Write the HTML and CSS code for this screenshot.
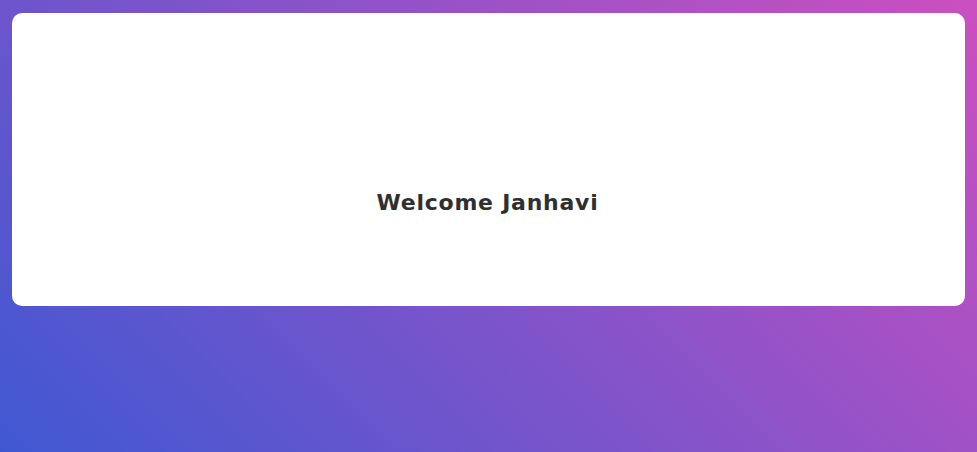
FILE: index.html
```html
<!DOCTYPE html>
<html lang="en">
<head>
<meta charset="utf-8">
<title>Welcome</title>
<link rel="stylesheet" href="styles.css">
</head>
<body>
<main class="page">
  <section class="card">
    <h1 class="welcome">Welcome Janhavi</h1>
  </section>
</main>
</body>
</html>
```

FILE: styles.css
```css
html, body {
  margin: 0;
  height: 100%;
}
body {
  background: linear-gradient(45deg, #3f58d2, #cc4fc0);
  font-family: "DejaVu Sans", "Noto Sans", sans-serif;
}
.page {
  padding: 13px 12px;
  box-sizing: border-box;
  min-height: 100%;
}
.card {
  background: #fff;
  border-radius: 10px;
  height: 293px;
  box-sizing: border-box;
  display: flex;
  justify-content: center;
  padding-top: 175px;
}
.welcome {
  margin: 0 0 0 -2px;
  font-size: 22px;
  font-weight: 700;
  color: #2f2f2f;
  letter-spacing: 0.75px;
  line-height: 30px;
}
```
